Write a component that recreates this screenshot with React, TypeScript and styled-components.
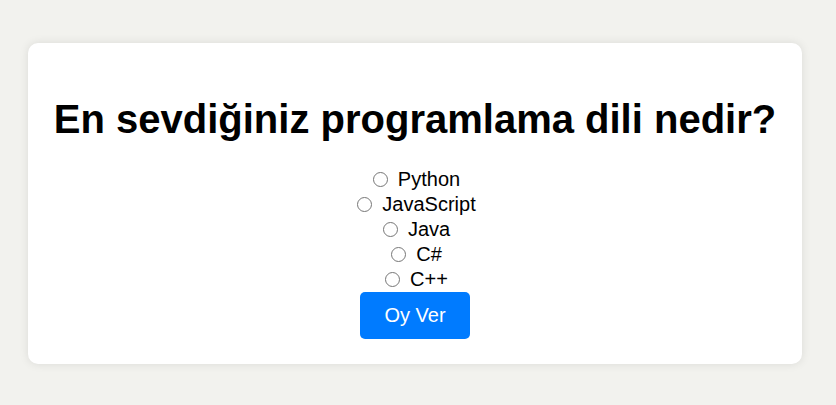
import React, { useState } from 'react';
import styled, { createGlobalStyle } from 'styled-components';

const GlobalStyle = createGlobalStyle`
    html, body {
        margin: 0;
        padding: 0;
    }
    body {
        background: #f2f2ee;
        font-family: 'Liberation Sans', Arial, sans-serif;
    }
`;

const Page = styled.div`
    display: flex;
    justify-content: center;
    align-items: center;
    min-height: 100vh;
    padding-top: 2px;
    padding-right: 6px;
    box-sizing: border-box;
`;

const Card = styled.div`
    background: #ffffff;
    padding: 26px 25.5px 25px;
    border-radius: 10px;
    box-shadow: 0 0 10px rgba(0, 0, 0, 0.1);
    text-align: center;
`;

const Question = styled.h1`
    font-size: 40px;
    font-weight: bold;
    color: #000;
    margin: 26.8px 0 24.8px;
    line-height: 46px;
`;

const Options = styled.div`
    display: flex;
    flex-direction: column;
    align-items: center;
`;

const Option = styled.label`
    display: flex;
    align-items: center;
    height: 25px;
    font-size: 20px;
    color: #000;
    cursor: pointer;
`;

const Radio = styled.input`
    width: 15px;
    height: 15px;
    margin: 0 10px 0 3px;
`;

const VoteButton = styled.button`
    background: #007bff;
    color: #fff;
    border: none;
    border-radius: 5px;
    padding: 12px 24.5px;
    font-family: inherit;
    font-size: 20px;
    line-height: 23px;
    cursor: pointer;
    &:hover {
        background: #0069d9;
    }
`;

const languages = ['Python', 'JavaScript', 'Java', 'C#', 'C++'];

const App = () => {
    const [choice, setChoice] = useState<string>('');

    return (
        <>
            <GlobalStyle />
            <Page>
                <Card>
                    <Question>En sevdiğiniz programlama dili nedir?</Question>
                    <Options>
                        {languages.map((lang) => (
                            <Option key={lang}>
                                <Radio
                                    type="radio"
                                    name="language"
                                    value={lang}
                                    checked={choice === lang}
                                    onChange={() => setChoice(lang)}
                                />
                                {lang}
                            </Option>
                        ))}
                    </Options>
                    <VoteButton type="button">Oy Ver</VoteButton>
                </Card>
            </Page>
        </>
    );
};

export default App;
